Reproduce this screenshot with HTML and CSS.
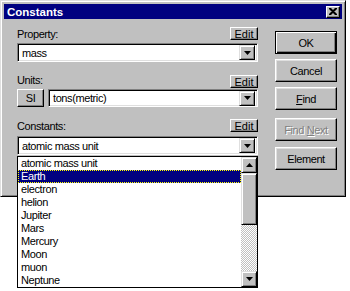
FILE: index.html
```html
<!DOCTYPE html>
<html lang="en">
<head>
    <meta charset="UTF-8">
    <title>Constants</title>
    <link rel="stylesheet" href="styles.css">
</head>
<body>
    <div class="dialog">
        <div class="titlebar">
            <span>Constants</span>
            <button class="close"><svg width="8" height="7" viewBox="0 0 8 7"><path d="M0 0h2l2 2 2-2h2v1L6 3l-1 .5L6 4l2 2v1H6L4 5 2 7H0V6l2-2 1-.5L2 3 0 1z" fill="#000"/></svg></button>
        </div>
        <div class="content">
            <div class="fields">
                <div class="head head-property"><span>Property:</span><button class="small">Edit</button></div>
                <div class="combo"><span class="value">mass</span><span class="drop"><svg width="7" height="4" viewBox="0 0 7 4"><path d="M0 0h7L3.5 4z" fill="#000"/></svg></span></div>

                <div class="head head-units"><span>Units:</span><button class="small">Edit</button></div>
                <div class="units-row">
                    <button class="si">SI</button>
                    <div class="combo grow"><span class="value">tons(metric)</span><span class="drop"><svg width="7" height="4" viewBox="0 0 7 4"><path d="M0 0h7L3.5 4z" fill="#000"/></svg></span></div>
                </div>

                <div class="head head-constants"><span>Constants:</span><button class="small">Edit</button></div>
                <div class="combo"><span class="value">atomic mass unit</span><span class="drop"><svg width="7" height="4" viewBox="0 0 7 4"><path d="M0 0h7L3.5 4z" fill="#000"/></svg></span></div>
            </div>
            <div class="buttons">
                <button class="btn default">OK</button>
                <button class="btn cancel">Cancel</button>
                <button class="btn find"><u>F</u>ind</button>
                <button class="btn disabled findnext">Find <u>N</u>ext</button>
                <button class="btn element">Element</button>
            </div>
        </div>

        <div class="droplist">
            <ul>
                <li>atomic mass unit</li>
                <li class="selected">Earth</li>
                <li>electron</li>
                <li>helion</li>
                <li>Jupiter</li>
                <li>Mars</li>
                <li>Mercury</li>
                <li>Moon</li>
                <li>muon</li>
                <li>Neptune</li>
            </ul>
            <div class="scrollbar">
                <span class="arrow"><svg width="7" height="4" viewBox="0 0 7 4"><path d="M0 4h7L3.5 0z" fill="#000"/></svg></span>
                <span class="thumb"></span>
                <span class="track"></span>
                <span class="arrow"><svg width="7" height="4" viewBox="0 0 7 4"><path d="M0 0h7L3.5 4z" fill="#000"/></svg></span>
            </div>
        </div>
    </div>
</body>
</html>
```

FILE: styles.css
```css
html, body {
    height: 100%;
}
body {
    margin: 0;
    min-height: 291px;
    background: #fff;
    font-family: "Liberation Sans", Arial, sans-serif;
    font-size: 11px;
    letter-spacing: -0.4px;
    color: #000;
}
button {
    font-family: "Liberation Sans", Arial, sans-serif;
    font-size: 11px;
    letter-spacing: -0.4px;
    color: #000;
    background: #c0c0c0;
    padding: 0;
    margin: 0;
    border: 1px solid;
    border-color: #fff #000 #000 #fff;
    box-shadow: inset -1px -1px #808080;
}
.dialog {
    position: relative;
    width: 346px;
    height: 197px;
    box-sizing: border-box;
    background: #c0c0c0;
    border: 1px solid;
    border-color: #dfdfdf #000 #000 #dfdfdf;
    box-shadow: inset 1px 1px #fff, inset -1px -1px #808080;
    padding: 3px;
}
.titlebar {
    height: 15px;
    background: #000080;
    color: #fff;
    font-weight: bold;
    font-size: 11.5px;
    letter-spacing: 0;
    display: flex;
    align-items: center;
    justify-content: space-between;
    padding: 0 2px 0 3px;
}
.close {
    width: 14px;
    height: 12px;
    display: flex;
    align-items: center;
    justify-content: center;
}
.content {
    display: flex;
    padding: 8px 0 0 13px;
}
.fields {
    width: 241px;
}
.head {
    display: flex;
    justify-content: space-between;
    align-items: flex-end;
    height: 13px;
}
.head span {
    line-height: 11px;
}
.small {
    width: 28px;
    height: 13px;
    line-height: 10px;
    letter-spacing: 0;
}
.combo {
    height: 19px;
    box-sizing: border-box;
    background: #fff;
    border: 1px solid;
    border-color: #808080 #fff #fff #808080;
    box-shadow: inset 1px 1px #000, inset -1px -1px #dfdfdf;
    display: flex;
    align-items: center;
    justify-content: space-between;
    padding: 2px 2px 2px 4px;
    margin-top: 3px;
}
.combo .drop {
    width: 16px;
    height: 15px;
    box-sizing: border-box;
    background: #c0c0c0;
    border: 1px solid;
    border-color: #dfdfdf #000 #000 #dfdfdf;
    box-shadow: inset 1px 1px #fff, inset -1px -1px #808080;
    display: flex;
    align-items: center;
    justify-content: center;
}
.head-units {
    margin-top: 13px;
}
.head-units span {
    margin-bottom: 2px;
}
.units-row {
    display: flex;
    gap: 4px;
    margin-top: 1px;
}
.units-row .combo {
    margin-top: 0;
    height: 18px;
}
.grow {
    flex: 1;
}
.si {
    width: 27px;
    height: 18px;
}
.head-constants {
    margin-top: 12px;
}
.head-constants + .combo {
    margin-top: 4px;
}
.buttons {
    margin-left: 17px;
    margin-top: 4px;
    width: 62px;
    display: flex;
    flex-direction: column;
}
.btn {
    height: 23px;
    width: 62px;
    box-shadow: inset -1px -1px #808080, inset 1px 1px #dfdfdf;
}
.default {
    border: 1px solid #000;
    box-shadow: inset 1px 1px #fff, inset -1px -1px #000, inset -2px -2px #808080;
}
.cancel { margin-top: 5px; }
.find { margin-top: 5px; }
.findnext { margin-top: 8px; }
.element { margin-top: 6px; }
.disabled {
    color: #808080;
    text-shadow: 1px 1px #fff;
}
.droplist {
    position: absolute;
    left: 16px;
    top: 155px;
    width: 241px;
    height: 132px;
    box-sizing: border-box;
    background: #fff;
    border: 1px solid #000;
    display: flex;
    z-index: 2;
}
.droplist ul {
    list-style: none;
    margin: 0;
    padding: 0;
    flex: 1;
}
.droplist li {
    height: 13px;
    line-height: 13px;
    padding-left: 3px;
}
.droplist li.selected {
    background: #000080;
    color: #fff;
    outline: 1px dotted #ff0;
    outline-offset: -1px;
}
.scrollbar {
    width: 16px;
    display: flex;
    flex-direction: column;
}
.scrollbar .arrow,
.scrollbar .thumb {
    box-sizing: border-box;
    background: #c0c0c0;
    border: 1px solid;
    border-color: #dfdfdf #000 #000 #dfdfdf;
    box-shadow: inset 1px 1px #fff, inset -1px -1px #808080;
}
.scrollbar .arrow {
    height: 16px;
    display: flex;
    align-items: center;
    justify-content: center;
}
.scrollbar .thumb {
    height: 52px;
}
.scrollbar .track {
    flex: 1;
    background: repeating-conic-gradient(#c0c0c0 0 25%, #fff 0 50%) 0 0 / 2px 2px;
}
```
